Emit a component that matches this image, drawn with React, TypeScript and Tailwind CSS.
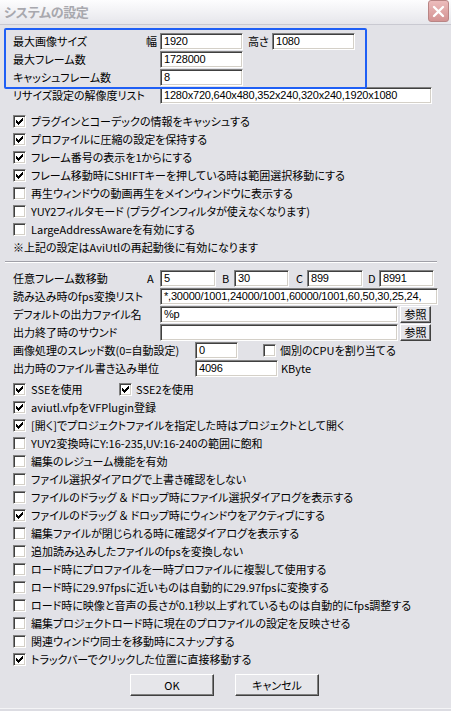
import React from "react";

const CHECK_PATH =
  "M6 0h1v1h-1z M5 1h2v1h-2z M0 2h1v1h-1z M4 2h3v1h-3z M0 3h2v1h-2z M3 3h3v1h-3z M0 4h5v1h-5z M1 5h3v1h-3z M2 6h1v1h-1z";

function Box({ checked }: { checked: boolean }) {
  return (
    <div className="w-[13px] h-[13px] shrink-0 box-border border border-t-[#808080] border-l-[#808080] border-r-white border-b-white bg-white shadow-[inset_1px_1px_0_#404040,inset_-1px_-1px_0_#d4d0c8] flex items-center justify-center">
      {checked && (
        <svg width="7" height="7" viewBox="0 0 7 7" shapeRendering="crispEdges">
          <path d={CHECK_PATH} fill="#000" />
        </svg>
      )}
    </div>
  );
}

function CheckRow({ checked, label }: { checked: boolean; label: string }) {
  return (
    <div className="flex items-center h-[18px]">
      <Box checked={checked} />
      <span className="ml-[5px] whitespace-nowrap">{label}</span>
    </div>
  );
}

function Input({ w, value }: { w: string; value?: string }) {
  return (
    <div
      className={`${w} h-[17px] shrink-0 box-border border border-t-[#808080] border-l-[#808080] border-r-white border-b-white bg-white shadow-[inset_1px_1px_0_#404040,inset_-1px_-1px_0_#d4d0c8] pl-[3px] overflow-hidden whitespace-nowrap leading-[15px] font-['Liberation_Sans','Noto_Sans_CJK_JP',sans-serif] text-[11px] tracking-[-0.2px]`}
    >
      {value}
    </div>
  );
}

function Btn({ w, h, label }: { w: string; h: string; label: string }) {
  return (
    <div
      className={`${w} ${h} shrink-0 box-border border border-t-white border-l-white border-r-[#404040] border-b-[#404040] shadow-[inset_-1px_-1px_0_#808080] bg-[#e6e6ea] flex items-center justify-center`}
    >
      {label}
    </div>
  );
}

const checks1: [boolean, string][] = [
  [true, "プラグインとコーデックの情報をキャッシュする"],
  [true, "プロファイルに圧縮の設定を保持する"],
  [true, "フレーム番号の表示を1からにする"],
  [true, "フレーム移動時にSHIFTキーを押している時は範囲選択移動にする"],
  [false, "再生ウィンドウの動画再生をメインウィンドウに表示する"],
  [false, "YUY2フィルタモード (プラグインフィルタが使えなくなります)"],
  [false, "LargeAddressAwareを有効にする"],
];

const checks2: [boolean, string][] = [
  [true, "aviutl.vfpをVFPlugin登録"],
  [true, "[開く]でプロジェクトファイルを指定した時はプロジェクトとして開く"],
  [false, "YUY2変換時にY:16-235,UV:16-240の範囲に飽和"],
  [false, "編集のレジューム機能を有効"],
  [false, "ファイル選択ダイアログで上書き確認をしない"],
  [false, "ファイルのドラッグ ＆ ドロップ時にファイル選択ダイアログを表示する"],
  [true, "ファイルのドラッグ ＆ ドロップ時にウィンドウをアクティブにする"],
  [false, "編集ファイルが閉じられる時に確認ダイアログを表示する"],
  [false, "追加読み込みしたファイルのfpsを変換しない"],
  [false, "ロード時にプロファイルを一時プロファイルに複製して使用する"],
  [false, "ロード時に29.97fpsに近いものは自動的に29.97fpsに変換する"],
  [false, "ロード時に映像と音声の長さが0.1秒以上ずれているものは自動的にfps調整する"],
  [false, "編集プロジェクトロード時に現在のプロファイルの設定を反映させる"],
  [false, "関連ウィンドウ同士を移動時にスナップする"],
  [true, "トラックバーでクリックした位置に直接移動する"],
];

export default function App() {
  return (
    <div className="relative w-[451px] h-[711px] overflow-hidden bg-[#e2e2e7] text-black text-[11px] leading-[18px] font-['Noto_Sans_CJK_JP',sans-serif] [font-feature-settings:'palt']">
      {/* Title bar */}
      <div className="h-[25px] flex items-center justify-between bg-gradient-to-b from-[#fdfdfe] to-[#e6e6eb] border-b border-[#c9c9d1]">
        <span className="ml-[4px] text-[13px] font-bold text-[#a8a8ae] tracking-[-0.3px]">システムの設定</span>
        <div className="mr-[2px] mb-[2px] w-[21px] h-[22px] rounded-[3px] border border-[#b98585] bg-gradient-to-b from-[#ecbcbc] to-[#d39393] flex items-center justify-center">
          <svg width="13" height="13" viewBox="0 0 13 13">
            <path d="M2 2L11 11M11 2L2 11" stroke="#fff" strokeWidth="2.4" strokeLinecap="round" />
          </svg>
        </div>
      </div>

      {/* Content */}
      <div className="pl-[13px] pt-[7px]">
        <div className="flex items-center h-[18px]">
          <span className="w-[133px] whitespace-nowrap">最大画像サイズ</span>
          <span className="w-[14px]">幅</span>
          <Input w="w-[83px]" value="1920" />
          <span className="ml-[5px] w-[24px]">高さ</span>
          <Input w="w-[83px]" value="1080" />
        </div>
        <div className="flex items-center h-[18px]">
          <span className="w-[147px] whitespace-nowrap">最大フレーム数</span>
          <Input w="w-[83px]" value="1728000" />
        </div>
        <div className="flex items-center h-[18px]">
          <span className="w-[147px] whitespace-nowrap">キャッシュフレーム数</span>
          <Input w="w-[83px]" value="8" />
        </div>
        <div className="flex items-center h-[18px]">
          <span className="w-[147px] whitespace-nowrap">リサイズ設定の解像度リスト</span>
          <Input w="w-[272px]" value="1280x720,640x480,352x240,320x240,1920x1080" />
        </div>

        <div className="mt-[8px]">
          {checks1.map(([c, l], i) => (
            <CheckRow key={i} checked={c} label={l} />
          ))}
          <div className="h-[18px] flex items-center whitespace-nowrap">※上記の設定はAviUtlの再起動後に有効になります</div>
        </div>

        <div className="mt-[5px] -ml-[8px] w-[432px] h-[2px] border-t border-[#a0a0a8] border-b border-b-white" />

        <div className="mt-[6px]">
          <div className="flex items-center h-[18px]">
            <span className="w-[134px] whitespace-nowrap">任意フレーム数移動</span>
            <span className="w-[13px]">A</span>
            <Input w="w-[56px]" value="5" />
            <span className="ml-[6px] w-[12px]">B</span>
            <Input w="w-[55px]" value="30" />
            <span className="ml-[7px] w-[11px]">C</span>
            <Input w="w-[56px]" value="899" />
            <span className="ml-[5px] w-[11px]">D</span>
            <Input w="w-[55px]" value="8991" />
          </div>
          <div className="flex items-center h-[18px]">
            <span className="w-[147px] whitespace-nowrap">読み込み時のfps変換リスト</span>
            <Input w="w-[278px]" value="*,30000/1001,24000/1001,60000/1001,60,50,30,25,24," />
          </div>
          <div className="flex items-center h-[18px]">
            <span className="w-[147px] whitespace-nowrap">デフォルトの出力ファイル名</span>
            <Input w="w-[238px]" value="%p" />
            <div className="ml-[2px]">
              <Btn w="w-[31px]" h="h-[17px]" label="参照" />
            </div>
          </div>
          <div className="flex items-center h-[18px]">
            <span className="w-[147px] whitespace-nowrap">出力終了時のサウンド</span>
            <Input w="w-[238px]" value="" />
            <div className="ml-[2px]">
              <Btn w="w-[31px]" h="h-[17px]" label="参照" />
            </div>
          </div>
          <div className="flex items-center h-[18px]">
            <span className="w-[182px] whitespace-nowrap">画像処理のスレッド数(0=自動設定)</span>
            <Input w="w-[43px]" value="0" />
            <div className="ml-[25px]">
              <Box checked={false} />
            </div>
            <span className="ml-[4px] whitespace-nowrap">個別のCPUを割り当てる</span>
          </div>
          <div className="flex items-center h-[18px]">
            <span className="w-[182px] whitespace-nowrap">出力時のファイル書き込み単位</span>
            <Input w="w-[83px]" value="4096" />
            <span className="ml-[3px]">KByte</span>
          </div>
        </div>

        <div className="mt-[3px]">
          <div className="flex items-center h-[18px]">
            <Box checked={true} />
            <span className="ml-[5px] w-[88px] whitespace-nowrap">SSEを使用</span>
            <Box checked={true} />
            <span className="ml-[4px] whitespace-nowrap">SSE2を使用</span>
          </div>
          {checks2.map(([c, l], i) => (
            <CheckRow key={i} checked={c} label={l} />
          ))}
        </div>

        <div className="mt-[6px] pl-[117px] flex gap-[21px]">
          <Btn w="w-[84px]" h="h-[22px]" label="OK" />
          <Btn w="w-[84px]" h="h-[22px]" label="キャンセル" />
        </div>
      </div>

      <div className="absolute left-0 right-0 top-[708px] h-[3px] border-t border-[#f4f4f6] bg-[#dcdce2]" />

      {/* Highlight box overlay */}
      <div className="absolute left-[4px] top-[28px] w-[363px] h-[61px] border-2 border-[#1f5ff5] rounded-[2px] pointer-events-none" />
    </div>
  );
}
